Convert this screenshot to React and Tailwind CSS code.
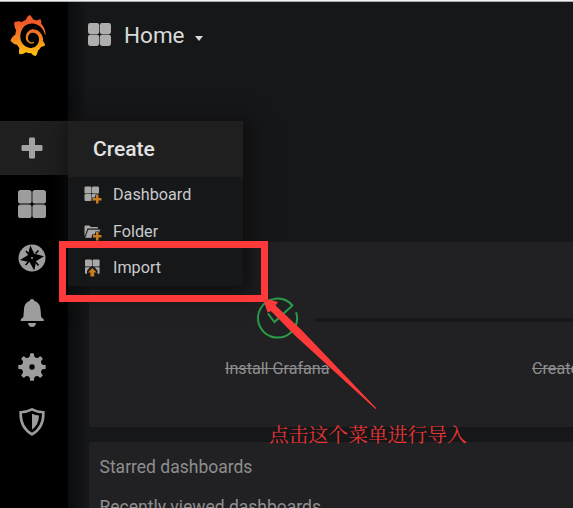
import React from "react";
import { SiGrafana } from "react-icons/si";

function Tiles({ className }) {
  return (
    <svg viewBox="0 0 28 28" className={className} fill="currentColor">
      <rect width="13.600" height="13.600" rx="2.600" />
      <rect x="14.400" width="13.600" height="13.600" rx="2.600" />
      <rect y="14.400" width="13.600" height="13.600" rx="2.600" />
      <rect x="14.400" y="14.400" width="13.600" height="13.600" rx="2.600" />
    </svg>
  );
}

function Logo() {
  return (
    <div className="flex h-[119px] w-full items-start pl-[9px] pt-[13px]">
      <svg width="0" height="0" className="absolute">
        <defs>
          <linearGradient id="flame" x1="0" y1="0" x2="0" y2="1">
            <stop offset="0.200" stopColor="#f05a28" />
            <stop offset="0.600" stopColor="#f68a1f" />
            <stop offset="1" stopColor="#fdc80c" />
          </linearGradient>
        </defs>
      </svg>
      <SiGrafana className="h-[41px] w-[38px]" fill="url(#flame)" stroke="none" strokeWidth="0" preserveAspectRatio="none" />
    </div>
  );
}

function Compass() {
  return (
    <svg viewBox="0 0 28 28" className="size-[28px]">
      <circle cx="14" cy="14" r="13.500" fill="#9d9d9d" />
      <path d="M12.300 1.500l4 8.300 9.700 2.400-7.700 4.800-2.100 9.500-4.500-8.200-9.700-2.200 7.700-4.800z" fill="#000" />
      <path d="M8 7l2.500 3M20.500 6.500l-3 3M7.500 21l3-3M20.500 21.500l-2.500-3" stroke="#000" strokeWidth="1.600" />
      <circle cx="14" cy="14" r="1" fill="#9d9d9d" />
    </svg>
  );
}

function Bell() {
  return (
    <svg viewBox="0 0 24 28" className="h-[28px] w-[24px]" fill="#9d9d9d">
      <path d="M12 0c1.300 0 2.200.8 2.300 2C18.500 3.200 20.300 6.500 20.500 10.500l.7 7.800 2 1.500q.8.700.6 2.200H.7q-.2-1.500.6-2.200l2-1.500.7-7.800C4.200 6.500 5.700 3.200 9.700 2 9.900.8 10.700 0 12 0z" />
      <path d="M8 24h8q-.5 4-4 4t-4-4z" />
    </svg>
  );
}

function Cog() {
  return (
    <svg viewBox="-14 -14 28 28" className="size-[28px]" fill="#9d9d9d">
      {[0, 45, 90, 135, 180, 225, 270, 315].map((a) => (
        <path key={a} d="M-4.500-8.500L-2.300-10.500-1.900-13.200q.2-.5.700-.5h2.400q.5 0 .7.500l.4 2.700 2.200 2z" transform={`rotate(${a})`} />
      ))}
      <circle r="6.200" fill="none" stroke="#9d9d9d" strokeWidth="7" />
    </svg>
  );
}

function Shield() {
  return (
    <svg viewBox="0 0 26 28" className="h-[28px] w-[26px]">
      <path d="M13 1.300q5 2.500 11.300 2.900C24.800 14.500 21.500 21.500 13 26.300 4.500 21.500 1.200 14.500 1.700 4.200 8 3.800 13 1.300 13 1.300z" fill="none" stroke="#9d9d9d" strokeWidth="2.600" />
      <path d="M13 5.700q3.500 1.500 7 1.800-.2 9.300-7 14.300z" fill="#9d9d9d" />
    </svg>
  );
}

function NavItem({ active, children }) {
  return (
    <div className={`flex w-full shrink-0 items-center justify-center pr-1 text-[#9d9d9d] ${active ? "h-[54px] bg-[#1f1f1f]" : "h-[54.500px] pt-[3px]"}`}>
      {children}
    </div>
  );
}

function Sidebar() {
  return (
    <nav className="flex h-full w-[68px] shrink-0 flex-col bg-black">
      <Logo />
      <NavItem active>
        <svg viewBox="0 0 22 22" className="mb-px size-[22px]" fill="#a2a2a2">
          <rect x="8" y="0.500" width="6" height="21" rx="1.200" />
          <rect x="0.500" y="8" width="21" height="6" rx="1.200" />
        </svg>
      </NavItem>
      <NavItem><Tiles className="size-[28px]" /></NavItem>
      <NavItem><Compass /></NavItem>
      <NavItem><Bell /></NavItem>
      <NavItem><Cog /></NavItem>
      <NavItem><Shield /></NavItem>
    </nav>
  );
}

function PlusBadge() {
  return <path d="M12 9h2.500v3h3v2.500h-3v3H12v-3H9V12h3z" fill="#c77d1e" stroke="#161719" strokeWidth="1.200" paintOrder="stroke" />;
}

function DashboardIcon() {
  return (
    <svg viewBox="0 0 18 18" className="size-[18px]" fill="#a8a8a8">
      <rect x="0.500" y="0.500" width="7" height="7" rx="1.300" />
      <rect x="8" y="0.500" width="7" height="7" rx="1.300" />
      <rect x="0.500" y="8" width="7" height="7" rx="1.300" />
      <path d="M8 8h6.500v2h-3v2H9v3H8z" />
      <PlusBadge />
    </svg>
  );
}

function FolderIcon() {
  return (
    <svg viewBox="0 0 18 18" className="size-[18px]">
      <path d="M.5 12V3.500q0-1 1-1h4L6.700 4H13q1 0 1 1v.5H3.500L.8 13z" fill="#a8a8a8" />
      <path d="M4 6.500h12.500L15 10.500h-4V12H8v3H1z" fill="#a8a8a8" stroke="#161719" strokeWidth="0.400" />
      <PlusBadge />
    </svg>
  );
}

function ImportIcon() {
  return (
    <svg viewBox="0 0 18 18" className="size-[18px]">
      <g fill="#a8a8a8">
        <rect x="1" y="0.500" width="7" height="7" rx="1.300" />
        <rect x="8.600" y="0.500" width="7" height="7" rx="1.300" />
        <path d="M1 8.300h5L3 11.700V15q-2 0-2-1.300V8.300zM10.600 8.300h5v5.400q0 1.300-2 1.300v-3.300z" />
      </g>
      <path d="M8.300 8.900l4.400 4.700h-2.500v3.900H6.400v-3.900H3.900z" fill="#c77d1e" />
    </svg>
  );
}

function MenuRow({ icon, label }) {
  return (
    <li className="flex h-[36.500px] items-center pl-4">
      {icon}
      <span className="ml-[11px] text-[16.200px] leading-5 text-[#c9cacc]">{label}</span>
    </li>
  );
}

function CreateMenu() {
  return (
    <div className="absolute left-[68px] top-[121px] h-[165px] w-[175px] bg-[#161719] shadow-[5px_5px_20px_5px_#0f0f10]">
      <div className="flex h-14 items-center bg-[#1f1f1f] pl-[25px] pt-px text-[21px] font-medium text-[#e3e3e3]">Create</div>
      <ul>
        <MenuRow icon={<DashboardIcon />} label="Dashboard" />
        <MenuRow icon={<FolderIcon />} label="Folder" />
        <MenuRow icon={<ImportIcon />} label="Import" />
      </ul>
    </div>
  );
}

function Main() {
  return (
    <main className="flex h-full min-w-0 flex-1 flex-col overflow-hidden bg-[#161719] bg-linear-to-r from-[#0b0c0d] to-[#161719] to-[20px] pl-[21px]">
      <header className="flex h-[240px] shrink-0 items-start pt-[20px] text-[#d8d9da]">
        <Tiles className="-ml-px mt-[1px] size-[23px] text-[#aeaeae]" />
        <h1 className="-mt-px ml-[13px] text-[22.500px] leading-7">Home</h1>
        <svg viewBox="0 0 8 5" className="ml-[10px] mt-[14px] h-[5px] w-[8px]"><path d="M0 0h8L4 5z" fill="#d8d9da" /></svg>
      </header>
      <section className="h-[185px] w-[520px] shrink-0 rounded-[3px] bg-[#212124]">
        <div className="flex h-[117px] items-start pl-[166px] pt-[53px]">
          <svg viewBox="0.600 1 44 44" className="size-[44px] shrink-0" fill="none" stroke="#299c46" strokeWidth="2">
            <path d="M41.700 18.200A19.500 19.500 0 1 1 38 11.500L20 28 13.500 19.500" />
          </svg>
          <div className="ml-[16px] mt-[23px] h-[4px] w-[290px] bg-[#161719]" />
        </div>
        <div className="flex text-[16.150px] leading-5 text-[#8e8e8e]">
          <span className="ml-[136px] w-[307px] shrink-0 line-through">Install Grafana</span>
          <span className="whitespace-nowrap line-through">Create</span>
        </div>
      </section>
      <section className="mt-[15px] h-[180px] w-[520px] shrink-0 rounded-[3px] bg-[#212124] pl-[10.500px] pt-[14px] text-[17.500px] leading-[22px] text-[#8e8e8e]">
        <div>Starred dashboards</div>
        <div className="mt-[17.500px]">Recently viewed dashboards</div>
      </section>
    </main>
  );
}

function Annotation() {
  return (
    <>
      <div className="absolute left-[59px] top-[241px] h-[61px] w-[209px] border-[7px] border-[#fd3a39]" />
      <svg viewBox="0 0 120 115" className="absolute left-[260px] top-[297px] h-[115px] w-[120px]" fill="#fd3a39">
        <path d="M3 1L18 5 15.500 8.500 41 32.500 116.500 111.500 115.500 112 35 38.500 11 14 7.500 15.500z" />
      </svg>
      <div className="absolute left-[269px] top-[422px] whitespace-nowrap font-['Noto_Serif_CJK_SC','Noto_Sans_CJK_SC',serif] text-[19.800px] leading-6 text-[#ee3535]">点击这个菜单进行导入</div>
    </>
  );
}

export default function App() {
  return (
    <div className="relative flex h-[508px] w-[573px] flex-col overflow-hidden bg-black font-['Roboto',sans-serif]">
      <div className="h-[2px] shrink-0 border-t border-[#f0f0f0] bg-[#a9adb0]" />
      <div className="flex min-h-0 flex-1">
        <Sidebar />
        <Main />
      </div>
      <CreateMenu />
      <Annotation />
    </div>
  );
}
